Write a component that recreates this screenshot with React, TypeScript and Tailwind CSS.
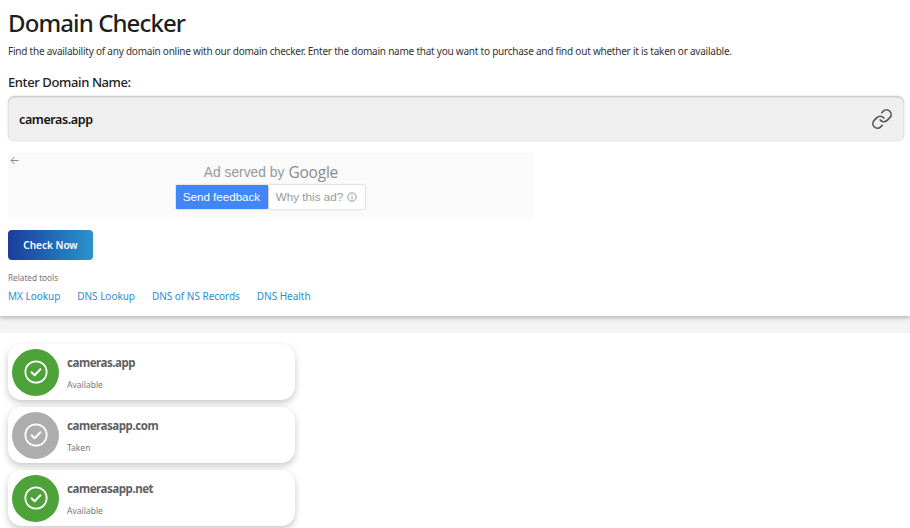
import { Link } from 'lucide-react';

const results = [
    { domain: 'cameras.app', status: 'Available', available: true },
    { domain: 'camerasapp.com', status: 'Taken', available: false },
    { domain: 'camerasapp.net', status: 'Available', available: true },
];

const tools = ['MX Lookup', 'DNS Lookup', 'DNS of NS Records', 'DNS Health'];

function ResultCard({ domain, status, available }: { domain: string; status: string; available: boolean }) {
    return (
        <div className="flex h-[56px] w-[287px] items-center gap-[8px] rounded-[14px] bg-white pl-[4px] shadow-[0_3px_7px_rgba(0,0,0,0.22)]">
            <div
                className={`flex h-[47px] w-[47px] shrink-0 items-center justify-center rounded-full ${
                    available ? 'bg-[#4ea23a]' : 'bg-[#adadad]'
                }`}
            >
                <svg width="24" height="24" viewBox="0 0 24 24" fill="none" stroke="white" strokeLinecap="round" strokeLinejoin="round">
                    <circle cx="12" cy="12" r="10.7" strokeWidth="1.7" />
                    <path d="M7.6 12.2l3 3 5.8-6" strokeWidth="2" />
                </svg>
            </div>
            <div className="flex h-full flex-col pt-[9.5px]">
                <div className="text-[11.5px] leading-[18px] font-bold tracking-[-0.45px] text-[#5f5f5f]">{domain}</div>
                <div className="mt-[6.5px] text-[8.5px] leading-[14px] text-[#777]">{status}</div>
            </div>
        </div>
    );
}

export default function App() {
    return (
        <div className="h-[528px] w-[910px] overflow-hidden bg-white font-['Noto_Sans',sans-serif]">
            <div className="relative h-[316px] bg-white px-[8px] pt-[6px] shadow-[0_2px_4px_rgba(0,0,0,0.25)]">
                <h1 className="text-[24px] leading-[34px] font-medium tracking-[-0.9px] text-[#1f1f1f]">Domain Checker</h1>
                <p className="mt-[2px] text-[10px] leading-[18px] tracking-[-0.23px] text-[#333]">
                    Find the availability of any domain online with our domain checker. Enter the domain name that you want to purchase and find out whether it is taken or available.
                </p>
                <div className="mt-[13px] text-[13px] leading-[18px] font-medium tracking-[-0.39px] text-[#222]">Enter Domain Name:</div>
                <div className="mt-[5px] flex h-[45px] w-[896px] items-center justify-between rounded-[7px] bg-[#efefef] pr-[11px] pl-[11px] shadow-[inset_0_1px_2px_rgba(0,0,0,0.2),0_0_2px_rgba(0,0,0,0.2)]">
                    <span className="pt-[3px] text-[12.5px] font-semibold tracking-[-0.4px] text-[#111]">cameras.app</span>
                    <Link className="h-[22px] w-[22px] text-[#555]" strokeWidth={1.8} />
                </div>

                <div className="relative mt-[12px] flex h-[66px] w-[526px] flex-col items-center bg-[#fafafa] pt-[10px] font-['Liberation_Sans',sans-serif]">
                    <svg className="absolute top-[3px] left-[2px]" width="9" height="9" viewBox="0 0 9 9" fill="none" stroke="#8a8a8a" strokeWidth="1">
                        <path d="M8.5 4.5H1M4.5 1l-3.5 3.5 3.5 3.5" />
                    </svg>
                    <div className="flex h-[20px] items-center gap-[4px] text-[13.8px] text-[#999]">
                        <span>Ad served by</span>
                        <span className="font-['Open_Sans',sans-serif] text-[15.5px] font-medium tracking-[-0.2px] text-[#8c8c8c]">Google</span>
                    </div>
                    <div className="mt-[2px] -ml-[2px] flex h-[24px] gap-[1px]">
                        <div className="flex w-[92px] items-center justify-center rounded-[1px] bg-[#4285f4] text-[11.6px] text-white shadow-[0_0_2px_rgba(0,0,0,0.3)]">
                            Send feedback
                        </div>
                        <div className="flex w-[96px] items-center justify-center gap-[4px] rounded-[1px] bg-white text-[11.7px] text-[#999] shadow-[0_0_2px_rgba(0,0,0,0.35)]">
                            Why this ad?
                            <svg width="10" height="10" viewBox="0 0 10 10" fill="none" stroke="#999" strokeWidth="1">
                                <circle cx="5" cy="5" r="4.2" />
                                <path d="M5 4.4v3M5 2.4v1" />
                            </svg>
                        </div>
                    </div>
                </div>

                <button className="mt-[11px] flex h-[30px] w-[85px] items-center justify-center rounded-[4px] bg-gradient-to-r from-[#1c3c9c] to-[#2b94cc] pt-[1px] text-[10px] font-semibold text-white">
                    Check Now
                </button>
                <div className="mt-[12px] text-[8.2px] leading-[12px] text-[#777]">Related tools</div>
                <div className="mt-[5px] flex gap-[17px] text-[10px] leading-[14px] tracking-[-0.03px] text-[#2a8fc9]">
                    {tools.map((tool) => (
                        <a key={tool}>{tool}</a>
                    ))}
                </div>
            </div>
            <div className="h-[17px] bg-[#f3f3f3]" />
            <div className="flex flex-col gap-[7px] bg-white px-[8px] pt-[11px]">
                {results.map((r) => (
                    <ResultCard key={r.domain} {...r} />
                ))}
            </div>
        </div>
    );
}
